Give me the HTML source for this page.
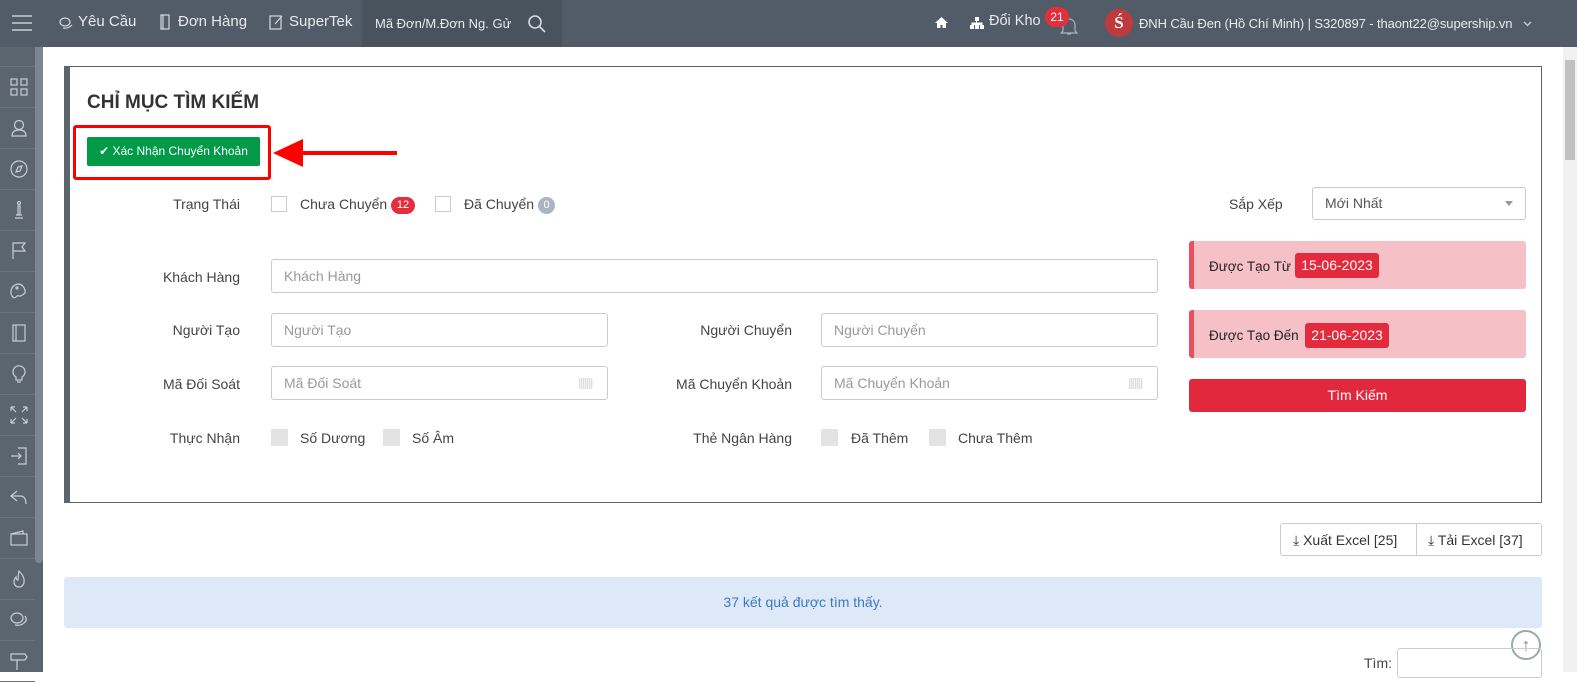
<!DOCTYPE html>
<html><head><meta charset="utf-8">
<style>
*{box-sizing:border-box;margin:0;padding:0}
body{width:1577px;height:672px;overflow:hidden;background:#fff;font-family:"Liberation Sans",sans-serif;font-size:14px;color:#333;position:relative}
.a{position:absolute}
.top{left:0;top:0;width:1577px;height:47px;background:#515c68;color:#e8ebee}
.top .t{position:absolute;top:13px;font-size:15px;white-space:nowrap}
.side{left:0;top:47px;width:43px;height:625px;background:#5b6570}
.side .it{position:absolute;left:0;width:35px;height:41px;border-bottom:1px solid #6a737d}
.side svg{position:absolute;left:10px;top:11px}
.lbl{position:absolute;font-size:14px;color:#444;text-align:right;width:160px}
.inp{position:absolute;height:34px;border:1px solid #c5cad3;border-radius:3px;color:#999;font-size:14px;padding:8px 12px}
.cb{position:absolute;width:16px;height:16px;border:1px solid #c8cbd0;background:#fff}
.cbg{position:absolute;width:17px;height:17px;background:#e3e3e3}
.tx{position:absolute;font-size:14px;color:#444;white-space:nowrap}
.bc{position:absolute;right:14px;top:11px;width:14px;height:11px;background:repeating-linear-gradient(90deg,#ddd 0 1px,#f3f3f3 1px 2px)}
</style></head><body>
<div class="a top">
  <svg class="a" style="left:12px;top:14px" width="20" height="18"><path d="M0 2h20M0 9h20M0 16h20" stroke="#c8ced4" stroke-width="1.5"/></svg>
  <svg class="a" style="left:59px;top:16px" width="15" height="14" fill="none" stroke="#d6dade" stroke-width="1.2"><ellipse cx="6" cy="6" rx="5" ry="4"/><path d="M4 12q5 1 9-3"/></svg>
  <span class="t" style="left:78px">Yêu Cầu</span>
  <svg class="a" style="left:160px;top:14px" width="10" height="16" fill="none" stroke="#d6dade" stroke-width="1.2"><rect x="1" y="1" width="8" height="14"/><path d="M3 1v14"/></svg>
  <span class="t" style="left:178px">Đơn Hàng</span>
  <svg class="a" style="left:269px;top:14px" width="15" height="16" fill="none" stroke="#d6dade" stroke-width="1.2"><rect x="1" y="2" width="11" height="13"/><path d="M6 10l7-8"/></svg>
  <span class="t" style="left:289px">SuperTek</span>
  <div class="a" style="left:362px;top:0;width:200px;height:47px;background:#49535e"></div>
  <span class="t" style="left:375px;top:16px;font-size:13px">Mã Đơn/M.Đơn Ng. Gử</span>
  <svg class="a" style="left:528px;top:15px" width="18" height="18" fill="none" stroke="#d6dade" stroke-width="1.6"><circle cx="7" cy="7" r="6"/><path d="M11 11l6 6"/></svg>
  <svg class="a" style="left:935px;top:17px" width="13" height="11" fill="#fff"><path d="M6.5 0L0 6h2v5h3.5V8h2v3H11V6h2z"/></svg>
  <svg class="a" style="left:970px;top:17px" width="14" height="12" fill="#fff"><rect x="5" y="0" width="4" height="4"/><rect x="0" y="8" width="4" height="4"/><rect x="5" y="8" width="4" height="4"/><rect x="10" y="8" width="4" height="4"/><path d="M6.5 4v2M2 8V6h10v2" stroke="#fff"/></svg>
  <span class="t" style="left:989px;font-size:14.5px">Đổi Kho</span>
  <svg class="a" style="left:1060px;top:16px" width="18" height="20" fill="none" stroke="#aab2ba" stroke-width="1.2"><path d="M3 15V9a6 6 0 0112 0v6l2 2H1zM7 18h4"/></svg>
  <div class="a" style="left:1045px;top:7px;width:24px;height:20px;border-radius:10px;background:#e52d3c;color:#fff;font-size:12px;text-align:center;line-height:20px">21</div>
  <div class="a" style="left:1105px;top:9px;width:28px;height:28px;border-radius:50%;background:#c0393b;color:#fff;font-family:'Liberation Serif',serif;font-weight:bold;text-align:center;line-height:27px;font-size:17px">Ś</div>
  <span class="t" style="left:1139px;top:16px;font-size:13px;letter-spacing:-0.1px">ĐNH Cầu Đen (Hồ Chí Minh) | S320897 - thaont22@supership.vn</span>
  <svg class="a" style="left:1523px;top:21px" width="9" height="6" fill="none" stroke="#ccd" stroke-width="1.3"><path d="M1 1l3.5 3.5L8 1"/></svg>
</div>
<div class="a side">
  <div class="a" style="left:35px;top:0;width:8px;height:516px;background:#7d858e;border-radius:0 0 4px 4px"></div>
  <div class="it" style="top:0;height:20px"></div>
  <div class="it" style="top:20px"><svg width="18" height="18" fill="none" stroke="#c9ced3" stroke-width="1.2"><rect x="1" y="1" width="6" height="6"/><rect x="11" y="1" width="6" height="6"/><rect x="1" y="11" width="6" height="6"/><rect x="11" y="11" width="6" height="6"/></svg></div>
  <div class="it" style="top:61px"><svg width="18" height="18" fill="none" stroke="#c9ced3" stroke-width="1.2"><circle cx="9" cy="6" r="4.5"/><path d="M2 17q0-6 7-6t7 6z"/></svg></div>
  <div class="it" style="top:102px"><svg width="18" height="18" fill="none" stroke="#c9ced3" stroke-width="1.2"><circle cx="9" cy="9" r="8"/><path d="M12 6l-2 5-4 1 2-5z"/></svg></div>
  <div class="it" style="top:143px"><svg width="18" height="18" fill="none" stroke="#c9ced3" stroke-width="1.2"><circle cx="9" cy="2" r="1.5"/><path d="M8 5h2v9H8zM5 17h8M6 14h6"/></svg></div>
  <div class="it" style="top:184px"><svg width="18" height="18" fill="none" stroke="#c9ced3" stroke-width="1.2"><path d="M3 17V1h12l-3 4 3 4H3"/></svg></div>
  <div class="it" style="top:225px"><svg width="18" height="18" fill="none" stroke="#c9ced3" stroke-width="1.2"><path d="M9 1a8 8 0 00-7 12q2 3 4 1t3-1 6-3A8 8 0 009 1z"/><circle cx="7" cy="5" r="1"/></svg></div>
  <div class="it" style="top:266px"><svg width="18" height="18" fill="none" stroke="#c9ced3" stroke-width="1.2"><rect x="3" y="1" width="12" height="16"/><path d="M6 1v16"/></svg></div>
  <div class="it" style="top:307px"><svg width="18" height="18" fill="none" stroke="#c9ced3" stroke-width="1.2"><path d="M6 12a6 6 0 116 0v3H6zM7 17h4"/></svg></div>
  <div class="it" style="top:348px"><svg width="18" height="18" fill="none" stroke="#c9ced3" stroke-width="1.2"><path d="M1 1l5 5M1 1h4M1 1v4M17 1l-5 5M17 1h-4M17 1v4M1 17l5-5M1 17h4M1 17v-4M17 17l-5-5M17 17h-4M17 17v-4"/></svg></div>
  <div class="it" style="top:389px"><svg width="18" height="18" fill="none" stroke="#c9ced3" stroke-width="1.2"><path d="M8 1h8v16H8M1 9h10M8 6l3 3-3 3"/></svg></div>
  <div class="it" style="top:430px"><svg width="18" height="18" fill="none" stroke="#c9ced3" stroke-width="1.2"><path d="M7 3L1 8l6 5M1 8h9q6 0 6 8"/></svg></div>
  <div class="it" style="top:471px"><svg width="18" height="18" fill="none" stroke="#c9ced3" stroke-width="1.2"><rect x="1" y="5" width="16" height="11"/><path d="M1 5l12-3v3"/></svg></div>
  <div class="it" style="top:512px"><svg width="18" height="18" fill="none" stroke="#c9ced3" stroke-width="1.2"><path d="M9 1q6 6 5 11a5 5 0 01-10 0q0-3 2-5 0 3 2 3 0-5 1-9z"/></svg></div>
  <div class="it" style="top:553px"><svg width="18" height="18" fill="none" stroke="#c9ced3" stroke-width="1.2"><ellipse cx="7" cy="7" rx="6" ry="5"/><path d="M5 14q6 1 9-2 4-3 1-7"/></svg></div>
  <div class="it" style="top:594px"><svg width="18" height="18" fill="none" stroke="#c9ced3" stroke-width="1.2"><path d="M1 2h14l2 3-2 3H1zM7 8v10"/></svg></div>
</div>
<div class="a" style="left:1563px;top:47px;width:14px;height:625px;background:#f1f1f1"></div>
<div class="a" style="left:1565px;top:60px;width:10px;height:100px;background:#c1c1c1"></div>

<div class="a" style="left:64px;top:66px;width:1478px;height:437px;border:1px solid #5c646c;border-left:6px solid #5c646c"></div>
<div class="a" style="left:87px;top:92px;font-size:19px;font-weight:bold;color:#333">CHỈ MỤC TÌM KIẾM</div>
<div class="a" style="left:73px;top:125px;width:198px;height:55px;border:3px solid #f00;border-radius:3px"></div>
<div class="a" style="left:87px;top:137px;width:173px;height:29px;background:#019a47;border-radius:2px;color:#fff;font-size:12px;line-height:29px;text-align:center">✔ Xác Nhận Chuyển Khoản</div>
<svg class="a" style="left:273px;top:138px" width="125" height="30"><path d="M0 15L30 1v28z" fill="#f00"/><path d="M28 15h96" stroke="#f00" stroke-width="4"/></svg>

<div class="lbl" style="left:80px;top:196px">Trạng Thái</div>
<div class="cb" style="left:271px;top:196px"></div><div class="tx" style="left:300px;top:196px">Chưa Chuyển</div>
<div class="a" style="left:391px;top:197px;width:24px;height:17px;border-radius:9px;background:#e52d3c;color:#fff;font-size:11px;text-align:center;line-height:17px">12</div>
<div class="cb" style="left:435px;top:196px"></div><div class="tx" style="left:464px;top:196px">Đã Chuyển</div>
<div class="a" style="left:538px;top:197px;width:17px;height:17px;border-radius:9px;background:#aab4c3;color:#fff;font-size:11px;text-align:center;line-height:17px">0</div>

<div class="lbl" style="left:80px;top:269px">Khách Hàng</div>
<div class="inp" style="left:271px;top:259px;width:887px">Khách Hàng</div>
<div class="lbl" style="left:80px;top:322px">Người Tạo</div>
<div class="inp" style="left:271px;top:313px;width:337px">Người Tạo</div>
<div class="lbl" style="left:632px;top:322px">Người Chuyển</div>
<div class="inp" style="left:821px;top:313px;width:337px">Người Chuyển</div>
<div class="lbl" style="left:80px;top:376px">Mã Đối Soát</div>
<div class="inp" style="left:271px;top:366px;width:337px">Mã Đối Soát<div class="bc"></div></div>
<div class="lbl" style="left:632px;top:376px">Mã Chuyển Khoản</div>
<div class="inp" style="left:821px;top:366px;width:337px">Mã Chuyển Khoản<div class="bc"></div></div>
<div class="lbl" style="left:80px;top:430px">Thực Nhận</div>
<div class="cbg" style="left:271px;top:429px"></div><div class="tx" style="left:300px;top:430px">Số Dương</div>
<div class="cbg" style="left:383px;top:429px"></div><div class="tx" style="left:412px;top:430px">Số Âm</div>
<div class="lbl" style="left:632px;top:430px">Thẻ Ngân Hàng</div>
<div class="cbg" style="left:821px;top:429px"></div><div class="tx" style="left:851px;top:430px">Đã Thêm</div>
<div class="cbg" style="left:929px;top:429px"></div><div class="tx" style="left:958px;top:430px">Chưa Thêm</div>

<div class="tx" style="left:1229px;top:196px">Sắp Xếp</div>
<div class="inp" style="left:1312px;top:187px;width:214px;height:33px;color:#555;padding:7px 12px">Mới Nhất</div>
<svg class="a" style="left:1505px;top:201px" width="8" height="5"><path d="M0 0h8L4 5z" fill="#999"/></svg>
<div class="a" style="left:1189px;top:241px;width:337px;height:48px;background:#f6c1c6;border-left:5px solid #e8505f;border-radius:3px"></div>
<div class="tx" style="left:1209px;top:259px;color:#222;font-size:13.5px">Được Tạo Từ</div>
<div class="a" style="left:1295px;top:253px;width:84px;height:25px;background:#e32b3d;border-radius:3px;color:#fff;font-size:14px;line-height:25px;text-align:center">15-06-2023</div>
<div class="a" style="left:1189px;top:310px;width:337px;height:48px;background:#f6c1c6;border-left:5px solid #e8505f;border-radius:3px"></div>
<div class="tx" style="left:1209px;top:328px;color:#222;font-size:13.5px">Được Tạo Đến</div>
<div class="a" style="left:1305px;top:323px;width:84px;height:25px;background:#e32b3d;border-radius:3px;color:#fff;font-size:14px;line-height:25px;text-align:center">21-06-2023</div>
<div class="a" style="left:1189px;top:379px;width:337px;height:33px;background:#e2283d;border-radius:3px;color:#fff;font-size:14px;line-height:33px;text-align:center">Tìm Kiếm</div>

<div class="a" style="left:1280px;top:523px;width:262px;height:33px;border:1px solid #ccc;border-radius:3px"></div>
<div class="a" style="left:1416px;top:523px;width:1px;height:33px;background:#ccc"></div>
<div class="tx" style="left:1293px;top:532px;color:#333">⤓ Xuất Excel [25]</div>
<div class="tx" style="left:1428px;top:532px;color:#333">⤓ Tải Excel [37]</div>

<div class="a" style="left:64px;top:577px;width:1478px;height:51px;background:#dde9f7;border-radius:3px;color:#3c78c8;font-size:14px;line-height:51px;text-align:center">37 kết quả được tìm thấy.</div>
<div class="a" style="left:1511px;top:630px;width:30px;height:30px;border:2px solid #9aa;border-radius:50%;background:#fff;color:#889;text-align:center;line-height:26px;font-size:18px">↑</div>
<div class="tx" style="left:1364px;top:655px">Tìm:</div>
<div class="a" style="left:1397px;top:648px;width:145px;height:30px;border:1px solid #ccc;border-radius:3px"></div>
</body></html>
